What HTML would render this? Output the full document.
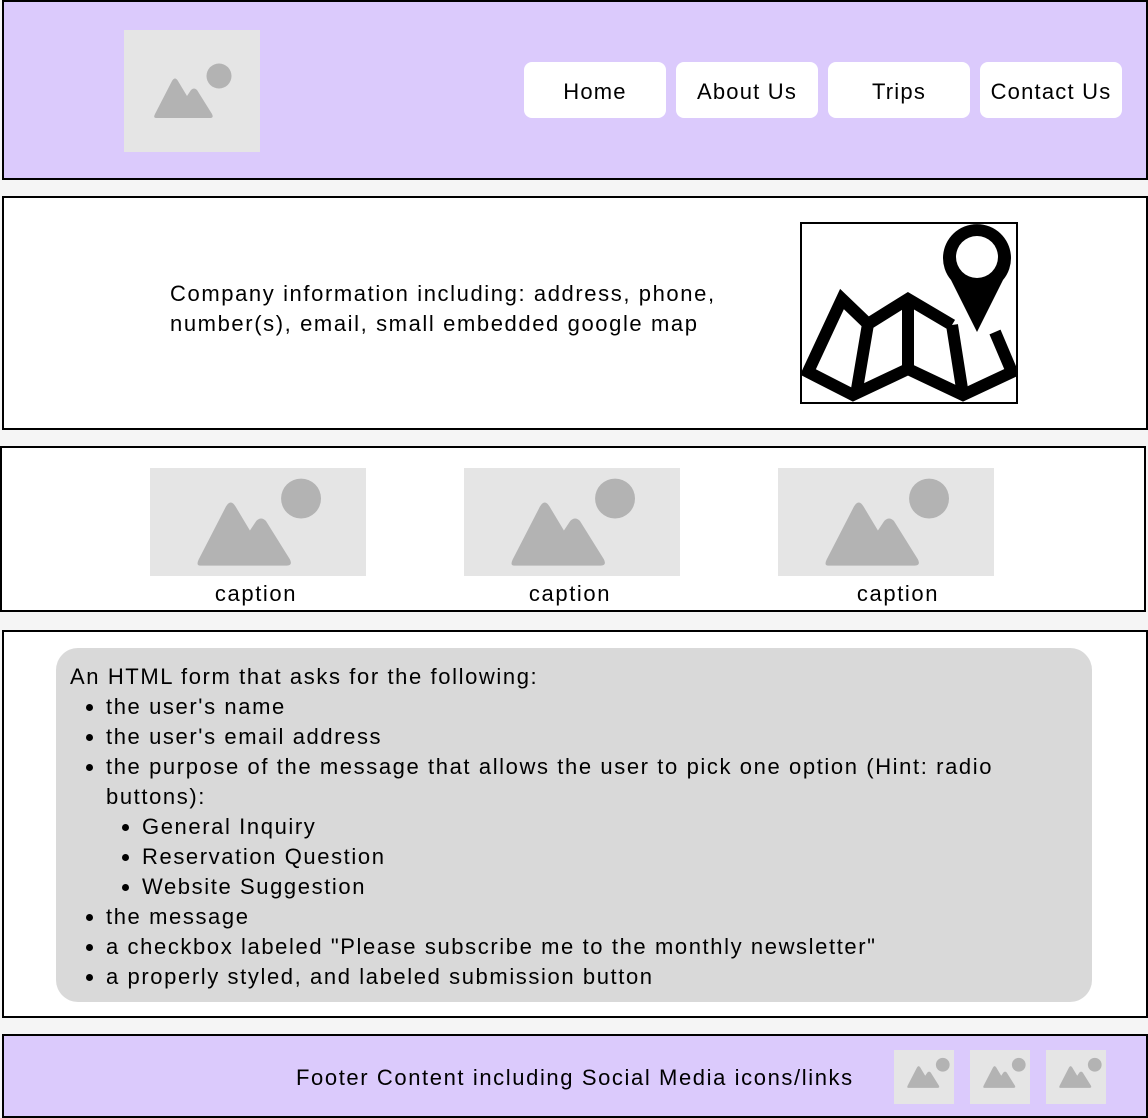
<!DOCTYPE html>
<html><head><meta charset="utf-8"><style>
*{margin:0;padding:0;box-sizing:border-box}
body{width:1148px;height:1118px;background:#f5f5f5;position:relative;overflow:hidden;font-family:"Liberation Sans",sans-serif;color:#000;font-size:22px;letter-spacing:1.6px}
.box{position:absolute;border:2px solid #000}
.ph{position:absolute;background:#e5e5e5}
.ph svg{position:absolute}
.btn{position:absolute;top:62px;height:56px;width:142px;background:#fff;border-radius:8px;text-align:center;line-height:60px;font-size:22px;white-space:nowrap;letter-spacing:1.2px}
.cap{position:absolute;top:580px;width:216px;text-align:center;line-height:28px}
ul{list-style:disc;padding-left:36px}
li{line-height:30px}
</style></head><body>
<svg width="0" height="0" style="position:absolute"><defs><g id="pic"><path d="M2,42 Q-1,42 1,38 L18,5 Q21,0 24,5 L33,20 L37,14 Q40,11 43,14 L58,38 Q60,42 56,42 Z" fill="#b3b3b3"/><circle cx="65" cy="0" r="12.5" fill="#b3b3b3"/></g></defs></svg>

<div class="box" style="left:2px;top:0;width:1146px;height:180px;background:#dbcafc"></div>
<div class="ph" style="left:124px;top:30px;width:136px;height:122px"><svg style="left:28px;top:32px" width="82" height="58" viewBox="-2 -14 82 58"><use href="#pic"/></svg></div>
<div class="btn" style="left:524px">Home</div>
<div class="btn" style="left:676px">About Us</div>
<div class="btn" style="left:828px">Trips</div>
<div class="btn" style="left:980px">Contact Us</div>

<div class="box" style="left:2px;top:196px;width:1146px;height:234px;background:#fff"></div>
<div style="position:absolute;left:170px;top:279px;line-height:30px;white-space:nowrap">Company information including: address, phone,<br>number(s), email, small embedded google map</div>
<div style="position:absolute;left:800px;top:222px;width:218px;height:182px;border:2px solid #000;background:#fff;overflow:hidden">
<svg width="218" height="182" viewBox="800 222 218 182" style="position:absolute;left:-2px;top:-2px">
<path d="M995,332 L1012,372 L963,395 L908,369 L853,395 L808,372 L842,299 L868,324 L908,299 L952,325" fill="none" stroke="#000" stroke-width="12" stroke-linejoin="miter"/>
<path d="M868,324 L856,395 M908,299 L908,369 M952,325 L963,395" stroke="#000" stroke-width="12" fill="none"/>
<path d="M977,332 L951,280 A34,34 0 1 1 1003,280 Z" fill="#000"/>
<circle cx="977" cy="257" r="21" fill="#fff"/>
</svg></div>

<div class="box" style="left:0;top:446px;width:1146px;height:166px;background:#fff"></div>
<div class="ph" style="left:150px;top:468px;width:216px;height:108px"><svg style="left:44px;top:8px" width="131" height="93" viewBox="-2 -14 82 58"><use href="#pic"/></svg></div>
<div class="ph" style="left:464px;top:468px;width:216px;height:108px"><svg style="left:44px;top:8px" width="131" height="93" viewBox="-2 -14 82 58"><use href="#pic"/></svg></div>
<div class="ph" style="left:778px;top:468px;width:216px;height:108px"><svg style="left:44px;top:8px" width="131" height="93" viewBox="-2 -14 82 58"><use href="#pic"/></svg></div>
<div class="cap" style="left:148px">caption</div>
<div class="cap" style="left:462px">caption</div>
<div class="cap" style="left:790px">caption</div>

<div class="box" style="left:2px;top:630px;width:1146px;height:388px;background:#fff"></div>
<div style="position:absolute;left:56px;top:648px;width:1036px;height:354px;background:#d9d9d9;border-radius:22px;padding:14px 60px 0 14px">
<div style="line-height:30px">An HTML form that asks for the following:</div>
<ul>
<li>the user's name</li>
<li>the user's email address</li>
<li>the purpose of the message that allows the user to pick one option (Hint: radio buttons):
<ul><li>General Inquiry</li><li>Reservation Question</li><li>Website Suggestion</li></ul></li>
<li>the message</li>
<li style="white-space:nowrap">a checkbox labeled "Please subscribe me to the monthly newsletter"</li>
<li>a properly styled, and labeled submission button</li>
</ul></div>

<div class="box" style="left:2px;top:1034px;width:1146px;height:84px;background:#dbcafc"></div>
<div style="position:absolute;left:296px;top:1063px;line-height:30px;white-space:nowrap">Footer Content including Social Media icons/links</div>
<div class="ph" style="left:894px;top:1050px;width:60px;height:54px"><svg style="left:12px;top:7px" width="45" height="32" viewBox="-2 -14 82 58"><use href="#pic"/></svg></div>
<div class="ph" style="left:970px;top:1050px;width:60px;height:54px"><svg style="left:12px;top:7px" width="45" height="32" viewBox="-2 -14 82 58"><use href="#pic"/></svg></div>
<div class="ph" style="left:1046px;top:1050px;width:60px;height:54px"><svg style="left:12px;top:7px" width="45" height="32" viewBox="-2 -14 82 58"><use href="#pic"/></svg></div>
</body></html>
